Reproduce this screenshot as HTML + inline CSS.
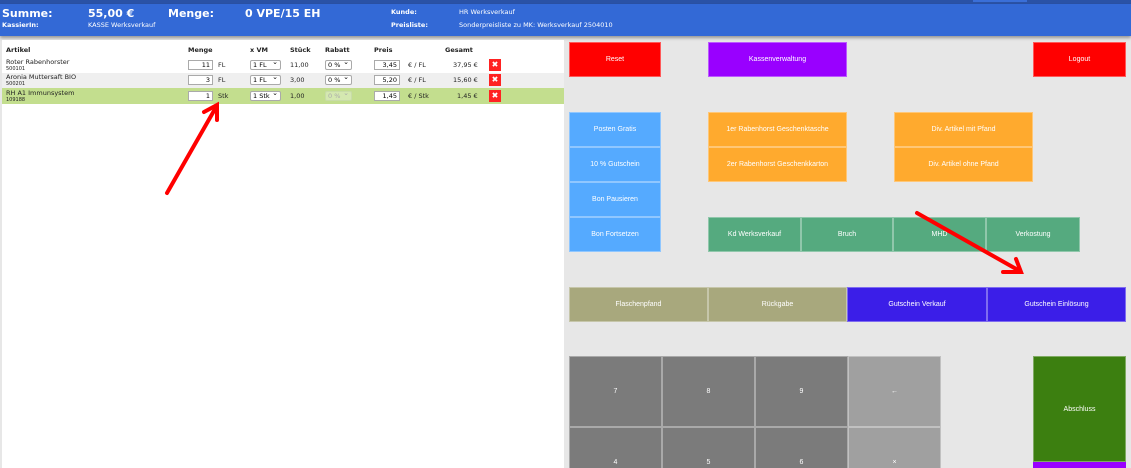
<!DOCTYPE html>
<html><head><meta charset="utf-8"><style>
*{margin:0;padding:0;box-sizing:border-box}
html,body{width:1131px;height:468px;overflow:hidden}
body{background:#e7e7e7;font-family:"DejaVu Sans","Liberation Sans",sans-serif;position:relative}
.a{position:absolute}
#top{left:0;top:0;width:1131px;height:4px;background:#2a52a6}
#tab{left:973px;top:0;width:54px;height:2px;background:#3a6fd8}
#hdr{left:0;top:4px;width:1131px;height:32px;background:#3369d6;box-shadow:0 2px 3px rgba(0,0,0,.35);color:#fff}
.big{font-weight:bold;font-size:11px}
.sm{font-size:6.5px}
.smb{font-size:6.5px;font-weight:bold}
#left{left:2px;top:40px;width:562px;height:428px;background:#fff}
.row{position:absolute;left:2px;width:562px;height:16px;font-size:6.5px;color:#222}
.t{position:absolute;font-size:6.5px;color:#222;white-space:nowrap}
.inp{position:absolute;height:10px;background:#fff;border:1px solid #aaa;font-size:6.5px;text-align:right;padding-right:2px;line-height:8px}
.sel{position:absolute;height:10px;background:#fff;border:1px solid #aaa;border-radius:2px;font-size:6.5px;padding-left:2px;line-height:8px}
.sel:after{content:"⌄";position:absolute;right:2px;top:-3px;font-size:7px}
.x{position:absolute;width:12px;height:12px;background:#f22;color:#fff;font-size:8px;font-weight:bold;text-align:center;line-height:12px}
.b{position:absolute;color:#fff;font-family:"Liberation Sans",sans-serif;font-size:7px;display:flex;align-items:center;justify-content:center;text-align:center;border:1px solid rgba(255,255,255,.35)}
.red{background:#ff0000}.pur{background:#9900ff}.lb{background:#55aaff}.or{background:#ffaa2e}.gr{background:#55aa7f}.ol{background:#a8a87d}.bl{background:#3b1ee8}.dg{background:#7b7b7b}.lg{background:#a0a0a0}.ab{background:#3c7f10}
</style></head><body>
<div class="a" id="top"></div><div class="a" id="tab"></div>
<div class="a" id="hdr">
 <div class="a big" style="left:2px;top:3px">Summe:</div>
 <div class="a big" style="left:88px;top:3px">55,00 €</div>
 <div class="a big" style="left:168px;top:3px">Menge:</div>
 <div class="a big" style="left:245px;top:3px">0 VPE/15 EH</div>
 <div class="a smb" style="left:2px;top:17px">KassierIn:</div>
 <div class="a sm" style="left:88px;top:17px">KASSE Werksverkauf</div>
 <div class="a smb" style="left:391px;top:4px">Kunde:</div>
 <div class="a sm" style="left:459px;top:4px">HR Werksverkauf</div>
 <div class="a smb" style="left:391px;top:17px">Preisliste:</div>
 <div class="a sm" style="left:459px;top:17px">Sonderpreisliste zu MK: Werksverkauf 2504010</div>
</div>
<div class="a" id="left"></div>
<div class="t" style="left:6px;top:46px;font-weight:bold">Artikel</div>
<div class="t" style="left:188px;top:46px;font-weight:bold">Menge</div>
<div class="t" style="left:250px;top:46px;font-weight:bold">x VM</div>
<div class="t" style="left:290px;top:46px;font-weight:bold">Stück</div>
<div class="t" style="left:325px;top:46px;font-weight:bold">Rabatt</div>
<div class="t" style="left:374px;top:46px;font-weight:bold">Preis</div>
<div class="t" style="left:445px;top:46px;font-weight:bold">Gesamt</div>

<div class="row" style="top:57px;background:#fff"></div>
<div class="row" style="top:73px;background:#efefef"></div>
<div class="row" style="top:88px;background:#c3de8e"></div>

<div class="t" style="left:6px;top:58px">Roter Rabenhorster</div><div class="t" style="left:6px;top:66px;font-size:5px">500101</div>
<div class="inp" style="left:188px;top:60px;width:25px">11</div><div class="t" style="left:218px;top:61px">FL</div>
<div class="sel" style="left:250px;top:60px;width:31px">1 FL</div><div class="t" style="left:290px;top:61px">11,00</div>
<div class="sel" style="left:325px;top:60px;width:27px">0 %</div>
<div class="inp" style="left:374px;top:60px;width:26px">3,45</div><div class="t" style="left:408px;top:61px">€ / FL</div>
<div class="t" style="left:453px;top:61px">37,95 €</div><div class="x" style="left:489px;top:59px">✖</div>

<div class="t" style="left:6px;top:73px">Aronia Muttersaft BIO</div><div class="t" style="left:6px;top:81px;font-size:5px">500201</div>
<div class="inp" style="left:188px;top:75px;width:25px">3</div><div class="t" style="left:218px;top:76px">FL</div>
<div class="sel" style="left:250px;top:75px;width:31px">1 FL</div><div class="t" style="left:290px;top:76px">3,00</div>
<div class="sel" style="left:325px;top:75px;width:27px">0 %</div>
<div class="inp" style="left:374px;top:75px;width:26px">5,20</div><div class="t" style="left:408px;top:76px">€ / FL</div>
<div class="t" style="left:453px;top:76px">15,60 €</div><div class="x" style="left:489px;top:74px">✖</div>

<div class="t" style="left:6px;top:89px">RH A1 Immunsystem</div><div class="t" style="left:6px;top:97px;font-size:5px">109188</div>
<div class="inp" style="left:188px;top:91px;width:25px">1</div><div class="t" style="left:218px;top:92px">Stk</div>
<div class="sel" style="left:250px;top:91px;width:31px">1 Stk</div><div class="t" style="left:290px;top:92px">1,00</div>
<div class="sel" style="left:325px;top:91px;width:27px;background:#d4e8b0;color:#aaa;border-color:#c8dca8">0 %</div>
<div class="inp" style="left:374px;top:91px;width:26px">1,45</div><div class="t" style="left:408px;top:92px">€ / Stk</div>
<div class="t" style="left:457px;top:92px">1,45 €</div><div class="x" style="left:489px;top:90px">✖</div>

<div class="b red" style="left:569px;top:42px;width:92px;height:35px">Reset</div>
<div class="b pur" style="left:708px;top:42px;width:139px;height:35px">Kassenverwaltung</div>
<div class="b red" style="left:1033px;top:42px;width:93px;height:35px">Logout</div>

<div class="b lb" style="left:569px;top:112px;width:92px;height:35px">Posten Gratis</div>
<div class="b lb" style="left:569px;top:147px;width:92px;height:35px">10 % Gutschein</div>
<div class="b lb" style="left:569px;top:182px;width:92px;height:35px">Bon Pausieren</div>
<div class="b lb" style="left:569px;top:217px;width:92px;height:35px">Bon Fortsetzen</div>

<div class="b or" style="left:708px;top:112px;width:139px;height:35px">1er Rabenhorst Geschenktasche</div>
<div class="b or" style="left:708px;top:147px;width:139px;height:35px">2er Rabenhorst Geschenkkarton</div>
<div class="b or" style="left:894px;top:112px;width:139px;height:35px">Div. Artikel mit Pfand</div>
<div class="b or" style="left:894px;top:147px;width:139px;height:35px">Div. Artikel ohne Pfand</div>

<div class="b gr" style="left:708px;top:217px;width:93px;height:35px">Kd Werksverkauf</div>
<div class="b gr" style="left:801px;top:217px;width:92px;height:35px">Bruch</div>
<div class="b gr" style="left:893px;top:217px;width:93px;height:35px">MHD</div>
<div class="b gr" style="left:986px;top:217px;width:94px;height:35px">Verkostung</div>

<div class="b ol" style="left:569px;top:287px;width:139px;height:35px">Flaschenpfand</div>
<div class="b ol" style="left:708px;top:287px;width:139px;height:35px">Rückgabe</div>
<div class="b bl" style="left:847px;top:287px;width:140px;height:35px">Gutschein Verkauf</div>
<div class="b bl" style="left:987px;top:287px;width:139px;height:35px">Gutschein Einlösung</div>

<div class="b dg" style="left:569px;top:356px;width:93px;height:71px">7</div>
<div class="b dg" style="left:662px;top:356px;width:93px;height:71px">8</div>
<div class="b dg" style="left:755px;top:356px;width:93px;height:71px">9</div>
<div class="b lg" style="left:848px;top:356px;width:93px;height:71px">←</div>
<div class="b dg" style="left:569px;top:427px;width:93px;height:41px;border-bottom:0;padding-top:28px">4</div>
<div class="b dg" style="left:662px;top:427px;width:93px;height:41px;border-bottom:0;padding-top:28px">5</div>
<div class="b dg" style="left:755px;top:427px;width:93px;height:41px;border-bottom:0;padding-top:28px">6</div>
<div class="b lg" style="left:848px;top:427px;width:93px;height:41px;border-bottom:0;padding-top:28px">×</div>
<div class="b ab" style="left:1033px;top:356px;width:93px;height:106px">Abschluss</div>
<div class="a pur" style="left:1033px;top:462px;width:93px;height:6px"></div>

<svg class="a" style="left:0;top:0" width="1131" height="468">
<g stroke="#f00" stroke-width="4" stroke-linecap="round" fill="none">
<line x1="167" y1="193" x2="215" y2="109"/>
<polyline points="204,112 217,105 217,120"/>
<line x1="917" y1="213" x2="1018" y2="270"/>
<polyline points="1003,272 1021,272 1016,259"/>
</g></svg>
</body></html>
